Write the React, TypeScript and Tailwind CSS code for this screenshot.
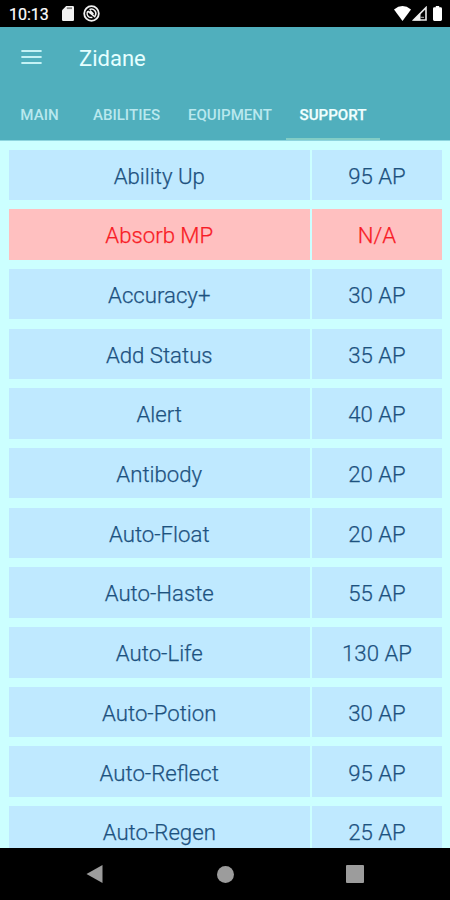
type Ability = { name: string; cost: string; locked?: boolean };

const abilities: Ability[] = [
  { name: "Ability Up", cost: "95 AP" },
  { name: "Absorb MP", cost: "N/A", locked: true },
  { name: "Accuracy+", cost: "30 AP" },
  { name: "Add Status", cost: "35 AP" },
  { name: "Alert", cost: "40 AP" },
  { name: "Antibody", cost: "20 AP" },
  { name: "Auto-Float", cost: "20 AP" },
  { name: "Auto-Haste", cost: "55 AP" },
  { name: "Auto-Life", cost: "130 AP" },
  { name: "Auto-Potion", cost: "30 AP" },
  { name: "Auto-Reflect", cost: "95 AP" },
  { name: "Auto-Regen", cost: "25 AP" },
];

function StatusBar() {
  return (
    <div className="flex h-[27px] shrink-0 items-center bg-black pl-[9px] pr-[8px] text-white">
      <span className="w-[53px] pt-[2px] text-[16px] leading-none [-webkit-text-stroke:0.2px]">10:13</span>
      <svg className="h-[15px] w-[12px]" viewBox="0 0 12 15" fill="#f2f2f2">
        <path d="M4.2 0H10.8Q12 0 12 1.2V13.8Q12 15 10.8 15H1.2Q0 15 0 13.8V4.2Z" />
        <path d="M4.8 2.2H10" stroke="#888" strokeWidth="1.8" />
      </svg>
      <svg className="ml-[9px] h-[17px] w-[17px]" viewBox="0 0 17 17" fill="none" stroke="#f2f2f2">
        <circle cx="8.5" cy="8.5" r="7.3" strokeWidth="1.8" />
        <path d="M6.2 12.2A4.4 4.4 0 0 1 4.8 6.2M6.4 4.6a4.4 4.4 0 0 1 5.8 6.2M6.2 12.2l3.2.3" strokeWidth="1.5" />
        <path d="M4.8 6.2L12.4 12.2M7 5.6l3.4 3.4" strokeWidth="1.6" />
      </svg>
      <div className="ml-auto flex items-center">
        <svg className="h-[15px] w-[17px]" viewBox="0 0 17 15" fill="#fff">
          <path d="M0 3.5Q8.5-3.3 17 3.5L8.5 15Z" />
        </svg>
        <svg className="ml-[1px] h-[15px] w-[15px]" viewBox="0 0 15 15">
          <path d="M14 1.6V14H1.6Z" fill="none" stroke="#e8e8e8" strokeWidth="1.6" />
          <path d="M8.5 6.5V14.5H1Z" fill="#f2f2f2" />
          <path d="M8.5 11.3H12" stroke="#b5b5b5" strokeWidth="1" />
        </svg>
        <svg className="ml-[6px] h-[15px] w-[9px]" viewBox="0 0 9 15" fill="#fff">
          <path d="M2.8 0H6.2V1.3H7.6Q9 1.3 9 2.7V13.6Q9 15 7.6 15H1.4Q0 15 0 13.6V2.7Q0 1.3 1.4 1.3H2.8Z" />
        </svg>
      </div>
    </div>
  );
}

function Header() {
  return (
    <header className="flex h-[113px] shrink-0 flex-col bg-[#50afbd]">
      <div className="flex h-[62px] items-center">
        <svg className="ml-[20.5px] mb-[2px] h-[16px] w-[21px]" viewBox="0 0 21 16" stroke="#c4f2f5" strokeWidth="2.2" strokeLinecap="round">
          <path d="M1.2 2H19.8M1.2 8H19.8M1.2 14H19.8" />
        </svg>
        <h1 className="ml-[37.5px] pt-[1px] text-[22px] leading-none text-[#e6ffff]">Zidane</h1>
      </div>
      <nav className="flex flex-1 text-[15.1px] font-medium whitespace-nowrap text-[#b9e8ee]">
        <span className="flex w-[79px] items-center justify-center pt-[2px]">MAIN</span>
        <span className="flex w-[95px] items-center justify-center pt-[2px]">ABILITIES</span>
        <span className="flex w-[112px] items-center justify-center pt-[2px]">EQUIPMENT</span>
        <span className="flex w-[94px] items-center justify-center border-b-2 border-[#82cdc6] pt-[4px] text-[#f0ffff] [-webkit-text-stroke:0.25px]">SUPPORT</span>
      </nav>
    </header>
  );
}

function AbilityRow({ name, cost, locked }: Ability) {
  const cell = locked ? "bg-[#ffc0c0] text-[#f81b25]" : "bg-[#bfe9ff] text-[#1d527f]";
  return (
    <div className="flex h-[50.5px] shrink-0 gap-[2px]">
      <div className={`flex w-[300.5px] items-center justify-center pt-[2px] ${cell}`}>{name}</div>
      <div className={`flex flex-1 items-center justify-center pt-[2px] pl-[1px] ${cell}`}>{cost}</div>
    </div>
  );
}

function NavigationBar() {
  return (
    <div className="flex h-[52px] shrink-0 items-center bg-black pl-[86px]">
      <svg className="h-[20px] w-[17px]" viewBox="0 0 17 20" fill="#9c9c9c">
        <path d="M16.5 1V19L.5 10Z" />
      </svg>
      <div className="ml-[114px] size-[17px] rounded-full bg-[#9c9c9c]" />
      <div className="ml-[112px] size-[18px] rounded-[1px] bg-[#9c9c9c]" />
    </div>
  );
}

export default function App() {
  return (
    <div className="flex h-[900px] w-[450px] flex-col overflow-hidden bg-[#ccffff] font-[Roboto,sans-serif]">
      <StatusBar />
      <Header />
      <main className="flex min-h-0 flex-1 flex-col gap-[9.2px] overflow-hidden border-t border-[#8ed5de] pt-[8.5px] pr-[8.5px] pl-[9px] text-[22.2px] leading-none font-light [-webkit-text-stroke:0.25px]">
        {abilities.map((ability) => (
          <AbilityRow key={ability.name} {...ability} />
        ))}
      </main>
      <NavigationBar />
    </div>
  );
}
